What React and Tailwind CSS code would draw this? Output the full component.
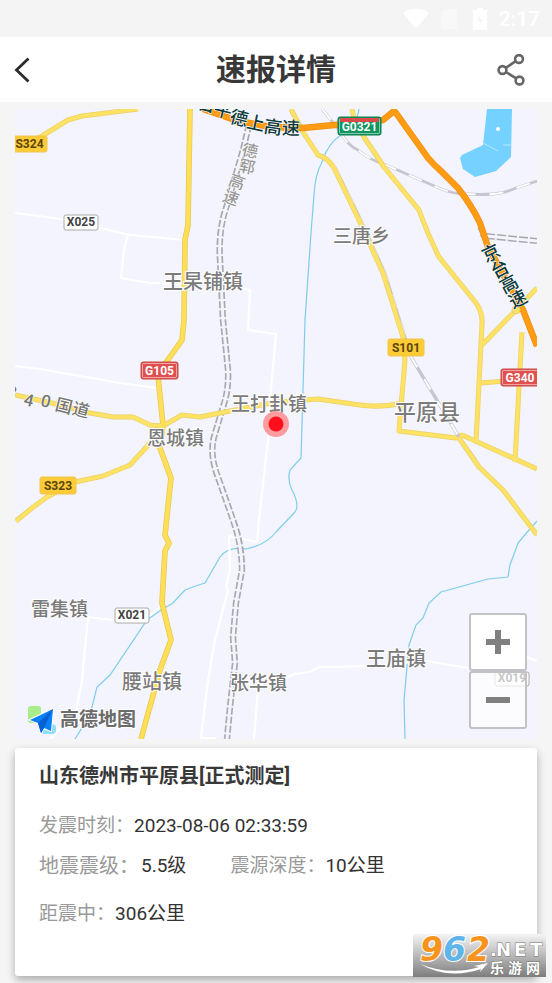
import React from 'react';

const LATIN_CJK = "font-[Roboto,'Noto_Sans_CJK_SC',sans-serif]";

const minorRoads = [
  'M15 213L62 219L130 235L185 240',
  'M128 235L124 250L121 278L150 283L185 284',
  'M226 285L250 290L248 330L276 334L270 400L268 440L259 520L257 542L229 536L230 570L226 587L228 590L215 640L208 680L201 738L216 738',
  'M15 366L40 369L120 383L157 388',
  'M88 617L112 620L148 617L162 605',
  'M88 617L82 680L76 712L50 739',
  'M286 678L294 674L309 672L319 667L336 667L368 666L426 661L469 668L505 670L527 657L537 661',
  'M258 690L254 739',
];

const mainRoads = [
  'M15 150L42 136L68 120L82 116L138 109',
  'M303 132L318 155Q328 158 334 168L359 220L383 273L403 337L405 360L401 407L399 431L456 438L462 435L537 469',
  'M291 109L303 132',
  'M352 109L354 118L364 137L384 167L419 210Q428 235 439 257L476 303Q483 313 482 325L476 442',
  'M482 345L516 310L537 288',
  'M522 332L515 462',
  'M481 383L505 381',
  'M459 438L479 467L503 490L537 535',
  'M15 395L52 403L90 413L113 417L133 417L150 425L163 426L182 415L200 417L230 411L277 402L318 399L360 405Q380 408 403 403',
  'M150 443L130 465L103 476L75 482L47 497L32 508L16 521',
];

const g105 =
  'M190 109L188 225L185 240L184 320L182 340L165 364L158 376L163 425L160 448L171 478L165 535L169 543L165 551L162 603L171 640L160 670L141 739';

const expressways = [
  'M203 109L235 120L270 127L303 128L345 124L383 120L394 111',
  'M392 109L396 113L428 158Q434 165 442 172L458 188Q472 206 480 223L488 247L523 310L537 346',
];

const rivers = [
  'M359 109Q357 125 341 135Q328 143 322 162Q315 175 314 195L311 233L305 320L303 390L301 458L290 470Q287 480 292 490Q300 505 295 512L276 532Q266 545 246 549Q228 546 220 557L205 583Q195 586 185 590L173 603Q160 610 147 620L110 675L97 687L90 715L75 739',
  'M537 521L529 530L518 543L510 565L508 577L488 579L441 592L429 603L423 618L416 625L409 645L404 700L405 739',
];

const railways = [
  'M322 109L339 130Q348 146 358 150Q370 160 386 165L439 188Q452 194 466 194Q480 195 493 194Q505 193 516 188L537 181',
  'M335 167L361 220L385 273L405 337L411 357L459 437L476 460',
];

const highSpeedRail =
  'M249 125L243 150L227 205Q218 230 220 260L223 320L228 370Q229 390 223 407L214 437Q209 455 219 480L233 520Q242 545 242 570L236 603L233 637L235 663L230 707L227 739';

const places = [
  ['三唐乡', 333, 243, 19],
  ['王杲铺镇', 163, 289, 20],
  ['王打卦镇', 231, 411, 19],
  ['恩城镇', 147, 445, 19],
  ['平原县', 394, 420, 22],
  ['雷集镇', 31, 616, 19],
  ['腰站镇', 122, 689, 20],
  ['张华镇', 230, 690, 19],
  ['王庙镇', 366, 666, 20],
];

const shields = [
  { text: 'S324', x: 12, y: 136, w: 35, h: 16, fill: '#fccb35', edge: '#f0c64d', color: '#5a4510' },
  { text: 'X025', x: 64, y: 215, w: 34, h: 15, fill: '#ffffff', edge: '#aaaaaa', color: '#444444' },
  { text: 'S101', x: 388, y: 339, w: 36, h: 17, fill: '#fccb35', edge: '#f0c64d', color: '#5a4510' },
  { text: 'S323', x: 40, y: 477, w: 36, h: 17, fill: '#fccb35', edge: '#f0c64d', color: '#5a4510' },
  { text: 'G105', x: 141, y: 362, w: 37, h: 17, fill: '#e0504e', edge: '#c94a48', color: '#ffffff', inner: true },
  { text: 'G340', x: 501, y: 369, w: 38, h: 17, fill: '#e0504e', edge: '#c94a48', color: '#ffffff', inner: true },
  { text: 'G0321', x: 338, y: 117, w: 43, h: 18, fill: '#0f9560', edge: '#0b7d50', color: '#ffffff', inner: true, top: true },
  { text: 'X021', x: 115, y: 608, w: 34, h: 15, fill: '#ffffff', edge: '#aaaaaa', color: '#444444' },
  { text: 'X019', x: 495, y: 672, w: 34, h: 14, fill: '#ffffff', edge: '#aaaaaa', color: '#444444' },
];

const roadNames = [
  { color: '#0d3b40', size: 18, chars: [['台', 207, 104, 14], ['平', 223, 110, 14], ['德', 239, 118, 14], ['上', 256, 123, 12], ['高', 273, 127, 8], ['速', 291, 128, 2]] },
  { color: '#0d3b40', size: 18, chars: [['京', 491, 253, -26], ['台', 500, 269, -28], ['高', 509, 284, -28], ['速', 518, 299, -28]] },
  { color: '#999999', size: 16, chars: [['德', 250, 151, 12], ['郓', 247, 167, 12], ['高', 237, 182, 20], ['速', 231, 198, 20]] },
  { color: '#777777', size: 17, chars: [['3', 12, 392, 14], ['4', 29, 400, 14], ['0', 46, 401, 14], ['国', 64, 406, 14], ['道', 81, 410, 14]] },
];

function Shield({ text, x, y, w, h, fill, edge, color, inner, top }) {
  return (
    <g>
      <rect x={x} y={y} width={w} height={h} rx="2" fill={fill} stroke={edge} />
      {inner && <rect x={x + 1.5} y={y + 1.5} width={w - 3} height={h - 3} rx="1" fill="none" stroke="#ffffff" strokeOpacity="0.5" />}
      {top && <rect x={x + 2} y={y + 1} width={w - 4} height="4" fill="#d84b48" />}
      <text x={x + w / 2} y={y + h - 4} textAnchor="middle" fontSize="12" fontWeight="700" fill={color}>
        {text}
      </text>
    </g>
  );
}

function MapDrawing() {
  return (
    <svg
      viewBox="15 109 522 630"
      preserveAspectRatio="xMidYMid slice"
      className={`block h-[630px] w-full bg-[#f3f4fe] ${LATIN_CJK}`}
      role="img"
      aria-label="震中地图"
    >
      <path d="M487 109H512L511 157L496 171L475 177L463 169L460 158L462 155L483 145Z" fill="#75d1ff" />
      <path d="M483 143L498 151M503 145H511" stroke="#b9e8ff" fill="none" />
      <circle cx="498" cy="129" r="2" fill="#fff" />
      <g fill="none" stroke="#7fcdeb" strokeWidth="1.2">
        {rivers.map((d) => <path key={d} d={d} />)}
      </g>
      <g fill="none" stroke="#ffffff" strokeWidth="2.2" strokeLinejoin="round">
        {minorRoads.map((d) => <path key={d} d={d} />)}
      </g>
      {railways.map((d) => (
        <g key={d} fill="none">
          <path d={d} stroke="#c6c6d0" strokeWidth="2.8" />
          <path d={d} stroke="#ffffff" strokeWidth="1.8" strokeDasharray="14 14" />
        </g>
      ))}
      <g fill="none">
        <path d={highSpeedRail} stroke="#a9a9b0" strokeWidth="6.4" strokeDasharray="7 2" />
        <path d={highSpeedRail} stroke="#f3f4fe" strokeWidth="3" />
        <path d="M486 236L537 241" stroke="#a9a9b0" strokeWidth="6" strokeDasharray="9 2" />
        <path d="M486 236L537 241" stroke="#f3f4fe" strokeWidth="3" />
        <path d="M478 228L484 240L480 235" stroke="#a9a9b0" />
      </g>
      <g fill="none" strokeLinejoin="round">
        {mainRoads.map((d) => <path key={d} d={d} stroke="#ead06a" strokeWidth="5" />)}
        <path d={g105} stroke="#e8c64f" strokeWidth="5.6" />
        {mainRoads.map((d) => <path key={d} d={d} stroke="#fee264" strokeWidth="3.6" />)}
        <path d={g105} stroke="#fedf58" strokeWidth="4.2" />
        {expressways.map((d) => <path key={d} d={d} stroke="#f08c0c" strokeWidth="6.4" />)}
        {expressways.map((d) => <path key={d} d={d} stroke="#ff9c13" strokeWidth="5" />)}
      </g>
      <circle cx="516" cy="310" r="4" fill="#fee264" stroke="#ead06a" />
      <path d="M411 357L459 437" stroke="#c6c6d0" strokeWidth="3.4" />
      <path d="M411 357L459 437" stroke="#ffffff" strokeWidth="2" strokeDasharray="12 14" />
      {shields.map((s) => <Shield key={s.text} {...s} />)}
      {roadNames.map(({ color, size, chars }) =>
        chars.map(([c, x, y, r]) => (
          <text
            key={`${c}${x}`}
            x={x}
            y={y}
            transform={`rotate(${r} ${x} ${y})`}
            textAnchor="middle"
            dominantBaseline="central"
            fontSize={size}
            fontWeight="500"
            fill={color}
            stroke="#ffffff"
            strokeWidth="1"
            paintOrder="stroke"
          >
            {c}
          </text>
        ))
      )}
      {places.map(([name, x, y, size]) => (
        <text key={name} x={x} y={y} fontSize={size} fontWeight="500" fill="#7b7b7b" stroke="#ffffff" strokeWidth="2" paintOrder="stroke">
          {name}
        </text>
      ))}
      <circle cx="276" cy="424" r="13" fill="#ff9c9f" />
      <circle cx="276" cy="424" r="7.5" fill="#ff101c" />
      <rect x="28" y="706" width="13" height="17" rx="3" fill="#a8ec8c" />
      <rect x="41" y="724" width="15" height="10" rx="4" fill="#8edcff" />
      <path d="M53 709L30 720L38 723L41 733L44 728L51 731Z" fill="#0b7ff5" stroke="#fff" strokeWidth="2" paintOrder="stroke" />
      <path d="M53 709L38 723L41 733L44 728Z" fill="#0560d6" />
      <text x="60" y="726" fontSize="19" fontWeight="700" fill="#6b6b6b" stroke="#ffffff" strokeWidth="2" paintOrder="stroke">
        高德地图
      </text>
    </svg>
  );
}

function StatusBar() {
  return (
    <div className="flex h-[37px] items-center justify-end bg-[#f4f4f4] pr-3 text-white">
      <svg width="26" height="20" viewBox="0 0 26 20" fill="currentColor" className="mr-3">
        <path d="M0 4Q13 -4 26 4L13 20Z" />
      </svg>
      <svg width="16" height="20" viewBox="0 0 16 20" className="mr-4 opacity-40" fill="currentColor">
        <path d="M4 0H16V20H0V4Z" />
      </svg>
      <svg width="14" height="22" viewBox="0 0 14 22" className="mr-3" fill="currentColor">
        <path d="M4 0H10V2H14V22H0V2H4Z" />
        <path d="M8 6L4 13H7L6 18L10 11H7Z" fill="#f4f4f4" />
      </svg>
      <span className="text-[21px] leading-6 font-medium">2:17</span>
    </div>
  );
}

function Header() {
  return (
    <header className="flex h-[65px] items-center justify-between bg-white px-3">
      <button type="button" aria-label="返回" className="flex h-10 w-11 items-center text-[#2c2c2e]">
        <svg width="20" height="26" viewBox="0 0 20 26" fill="none" stroke="currentColor" strokeWidth="2.8">
          <path d="M16.500 1.500L4.500 13L16.500 24.500" />
        </svg>
      </button>
      <h1 className="text-[30px] leading-10 font-bold text-[#383838]">速报详情</h1>
      <button type="button" aria-label="分享" className="flex h-10 w-11 items-center text-[#666666]">
        <svg width="30" height="32" viewBox="0 0 30 32" fill="none" stroke="currentColor" strokeWidth="2.6">
          <circle cx="23" cy="5" r="3.900" />
          <circle cx="6.500" cy="16" r="3.900" />
          <circle cx="23.500" cy="26.500" r="3.900" />
          <path d="M9.800 13.800L19.700 7.200M9.800 18L20.200 24.400" />
        </svg>
      </button>
    </header>
  );
}

function ZoomControls() {
  return (
    <div className="absolute right-[10px] bottom-[10px] flex w-[58px] flex-col">
      <button type="button" aria-label="放大" className="flex h-[58px] items-center justify-center rounded-[3px] border-2 border-[#c2c2c6] bg-white/95">
        <svg width="26" height="26" viewBox="0 0 26 26" fill="#808080">
          <path d="M10 1H16V10H25V16H16V25H10V16H1V10H10Z" />
        </svg>
      </button>
      <button type="button" aria-label="缩小" className="flex h-[58px] items-center justify-center rounded-[3px] border-2 border-[#c2c2c6] bg-white/70">
        <svg width="26" height="26" viewBox="0 0 26 26" fill="#808080">
          <path d="M1 10H25V16H1Z" />
        </svg>
      </button>
    </div>
  );
}

function Detail({ label, value, large }) {
  return (
    <div className="flex items-center">
      <dt className={large ? 'w-[102px] text-[20px] text-[#999999]' : 'text-[19px] text-[#999999]'}>{label}：</dt>
      <dd className="text-[19px] text-[#333333]">{value}</dd>
    </div>
  );
}

function SiteLogo() {
  return (
    <svg width="133" height="43" viewBox="0 0 133 43" className="absolute right-[6px] bottom-[6px]" role="img" aria-label="962.NET 乐游网">
      <defs>
        <linearGradient id="plate" x1="0" y1="0" x2="0" y2="1">
          <stop offset="0" stopColor="#f4f4f4" />
          <stop offset="0.5" stopColor="#b9b9b9" />
          <stop offset="1" stopColor="#7d7d7d" />
        </linearGradient>
      </defs>
      <rect width="133" height="43" fill="url(#plate)" />
      <g fontFamily="DejaVu Sans, sans-serif" fontWeight="700" fontStyle="italic" fontSize="33" stroke="#ffffff" strokeWidth="2" paintOrder="stroke">
        <text x="7" y="27" fill="#f7941e">9</text>
        <text x="30" y="27" fill="#5fb4ea">6</text>
        <text x="54" y="27" fill="#f7941e">2</text>
      </g>
      <path d="M7 30Q35 46 68 35L67 38L75 29L61 32L66 33Q37 42 7 30Z" fill="#fff" />
      <g fill="#fff" stroke="#777" strokeWidth="1" paintOrder="stroke">
        <g fontFamily="DejaVu Sans, sans-serif" fontWeight="700" fontSize="18">
          <text x="77" y="22">.</text>
          <text x="83" y="22">N</text>
          <text x="101" y="22">E</text>
          <text x="117" y="22">T</text>
        </g>
        <g fontFamily="Noto Sans CJK SC, sans-serif" fontWeight="700" fontSize="14">
          <text x="77" y="39">乐</text>
          <text x="95" y="39">游</text>
          <text x="113" y="39">网</text>
        </g>
      </g>
    </svg>
  );
}

export default function App() {
  return (
    <div className={`relative min-h-screen bg-[#f5f5f5] ${LATIN_CJK}`}>
      <StatusBar />
      <Header />
      <main className="px-[15px] pt-[7px] pb-[7px]">
        <section className="relative">
          <MapDrawing />
          <ZoomControls />
        </section>
        <section className="mt-[9px] min-h-[228px] rounded-[3px] bg-white px-6 pt-3 shadow-[0_4px_8px_rgba(0,0,0,0.3)]">
          <h2 className="text-[20px] leading-8 font-bold text-[#383838]">山东德州市平原县[正式测定]</h2>
          <dl className="mt-4 leading-9">
            <Detail label="发震时刻" value="2023-08-06 02:33:59" />
            <div className="mt-1 flex gap-11">
              <Detail label="地震震级" value="5.5级" large />
              <Detail label="震源深度" value="10公里" />
            </div>
            <div className="mt-3">
              <Detail label="距震中" value="306公里" />
            </div>
          </dl>
        </section>
      </main>
      <SiteLogo />
    </div>
  );
}
